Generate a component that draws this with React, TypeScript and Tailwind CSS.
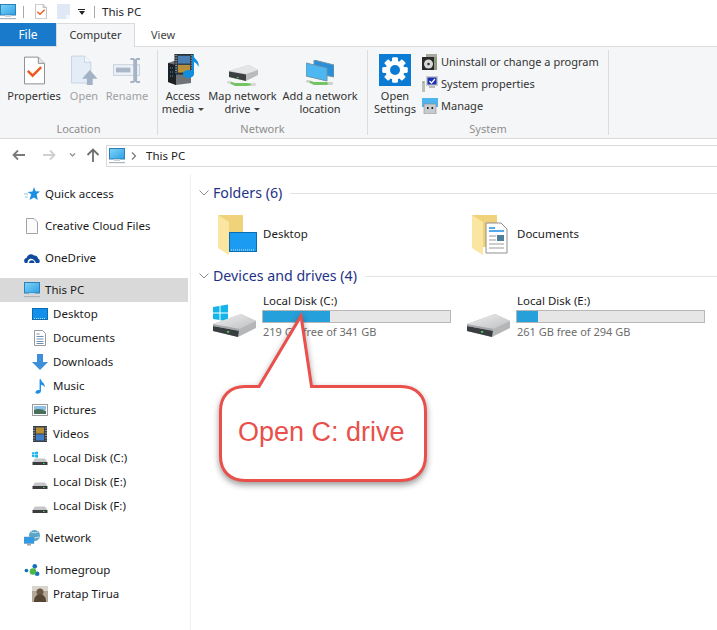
import type { ReactNode } from 'react';

const FONT = 'font-["Noto_Sans","Open_Sans",sans-serif]';

function PcIcon({ className = '' }: { className?: string }) {
  return (
    <svg viewBox="0 0 16 16" className={className}>
      <defs>
        <linearGradient id="pcg" x1="0" y1="0" x2="1" y2="1">
          <stop offset="0" stopColor="#7fd4f7" />
          <stop offset="1" stopColor="#2ea0e6" />
        </linearGradient>
      </defs>
      <rect x="0.5" y="0.5" width="15" height="10.5" fill="url(#pcg)" stroke="#2f7fb8" />
      <rect x="5" y="11" width="6" height="2" fill="#c9d3da" />
      <rect x="0" y="14" width="16" height="1.2" fill="#a9b4bc" />
    </svg>
  );
}

function PageCheck({ className = '' }: { className?: string }) {
  return (
    <svg viewBox="0 0 22 29" className={className}>
      <path d="M.5.5H15L21.5 7V28.5H.5Z" fill="#fff" stroke="#8b8b8b" />
      <path d="M15 .5V7h6.500" fill="#e6e6e6" stroke="#8b8b8b" />
      <path d="M4 15l5 5 9-9" fill="none" stroke="#ee5a1e" strokeWidth="2.6" />
    </svg>
  );
}

function OpenIcon({ className = '' }: { className?: string }) {
  return (
    <svg viewBox="0 0 28 31" className={className}>
      <path d="M.5.5H14L20.500 7V28.500H.5Z" fill="#e3ecf7" stroke="#c6d3e3" />
      <path d="M14 .5V7h6.500" fill="#f4f7fb" stroke="#c6d3e3" />
      <path d="M19.500 15L27.500 24H22.500V30.500H16.500V24H11.500Z" fill="#a3b2c5" />
    </svg>
  );
}

function RenameIcon({ className = '' }: { className?: string }) {
  return (
    <svg viewBox="0 0 29 28" className={className}>
      <rect x=".5" y="8" width="27" height="11" fill="#eef2f7" stroke="#c4d0de" />
      <rect x="3" y="11" width="15" height="5" fill="#a9b7c9" />
      <path d="M18 1h4v1h2v-1h4v2h-3v22h3v2h-4v-1h-2v1h-4v-2h3V3h-3Z" fill="#a5b3c4" />
    </svg>
  );
}

function MediaIcon({ className = '' }: { className?: string }) {
  return (
    <svg viewBox="0 0 33 31" className={className}>
      <path d="M1 9L10 6 24 9V29L9 31 1 28Z" fill="#6f7378" />
      <path d="M1 9L9 11V31L1 28Z" fill="#1d1f23" />
      <path d="M3 14h4M3 18h4M3 22h4" stroke="#2b9be0" strokeWidth="1" strokeDasharray="1 1" />
      <rect x="8" y="0" width="18" height="20" fill="#37424f" stroke="#1d232a" />
      <path d="M9 1v18M25 1v18" stroke="#d8d8d8" strokeDasharray="1 1.500" />
      <rect x="11" y="2" width="12" height="7.500" fill="#4a7fb5" />
      <rect x="11" y="11" width="12" height="7.500" fill="#b58f3a" />
      <path d="M26 1V19" stroke="#0f8ee0" strokeWidth="2" />
      <path d="M26 1c1 4 7 6 5.500 12-1-3-3-5-5.500-5Z" fill="#0f8ee0" />
      <ellipse cx="21.500" cy="20" rx="5.500" ry="4" fill="#0f8ee0" />
    </svg>
  );
}

function NetDriveIcon({ className = '' }: { className?: string }) {
  return (
    <svg viewBox="0 0 32 24" className={className}>
      <path d="M2 8L22 2 31 7V12L19 18 2 14Z" fill="#b9bbbd" />
      <path d="M2 8L22 2 31 7 19 11Z" fill="#e4e5e6" />
      <path d="M2 8.500L19 11.500V18L2 14Z" fill="#3c3f42" />
      <rect x="10" y="14" width="1.500" height="1.200" fill="#4fd65a" />
      <path d="M2 18L8 20H20L27 21V22L20 23H8L2 20Z" fill="#74c464" />
      <rect x="24" y="20" width="5" height="3" rx="1" fill="#d8d8d8" />
      <rect x="0" y="18" width="4" height="2.500" rx="1" fill="#d8d8d8" />
    </svg>
  );
}

function NetLocIcon({ className = '' }: { className?: string }) {
  return (
    <svg viewBox="0 0 28 26" className={className}>
      <path d="M8 0L28 5V17L8 13Z" fill="#2a8fd6" stroke="#6f93a8" />
      <path d="M0 3L21 8V21L0 16Z" fill="#4cb7f1" stroke="#6f93a8" />
      <path d="M2 20L8 22H20L25 23V24L20 25H8L2 22Z" fill="#74c464" />
      <rect x="22" y="22" width="5" height="3" rx="1" fill="#d0d0d0" />
      <rect x="0" y="20" width="4" height="2.500" rx="1" fill="#d0d0d0" />
    </svg>
  );
}

function GearTile({ className = '' }: { className?: string }) {
  const teeth = [0, 45, 90, 135, 180, 225, 270, 315];
  return (
    <svg viewBox="0 0 32 32" className={className}>
      <rect width="32" height="32" fill="#0c7bd4" />
      {teeth.map(a => (
        <rect key={a} x="13.200" y="3.500" width="5.600" height="25" rx="1" fill="#fff" transform={`rotate(${a} 16 16)`} />
      ))}
      <circle cx="16" cy="16" r="9.500" fill="#fff" />
      <circle cx="16" cy="16" r="5" fill="#0c7bd4" />
    </svg>
  );
}

function UninstallIcon() {
  return (
    <svg viewBox="0 0 16 16" className="w-4 h-4 shrink-0">
      <rect x="4" y="0" width="11" height="3" fill="#a8a8a0" />
      <rect x="0" y="3" width="15" height="13" fill="#2a2a2a" />
      <rect x="12" y="3" width="3" height="13" fill="#8f9c7e" />
      <circle cx="6.500" cy="10" r="4.500" fill="#d8d8d8" />
      <circle cx="6.500" cy="10" r="1.300" fill="#333" />
    </svg>
  );
}

function SysPropIcon() {
  return (
    <svg viewBox="0 0 16 16" className="w-4 h-4 shrink-0">
      <rect x="4" y="0" width="12" height="10" fill="#c8ccd0" />
      <rect x="5.500" y="1.500" width="9" height="7" fill="#1c2fb0" />
      <path d="M7.500 5l2 2 3.500-4" fill="none" stroke="#fff" strokeWidth="1.200" />
      <rect x="7" y="10" width="6" height="2" fill="#b5b9bd" />
      <rect x="0" y="5" width="3" height="11" fill="#b9c2b4" />
      <rect x="1" y="6" width="1" height="1" fill="#4fb548" />
    </svg>
  );
}

function ManageIcon() {
  return (
    <svg viewBox="0 0 16 16" className="w-4 h-4 shrink-0">
      <rect x="0" y="0" width="16" height="9" fill="#4db4ee" />
      <rect x="2" y="6" width="12" height="10" fill="#c8cbce" stroke="#8a8d90" strokeWidth="0.6" />
      <rect x="5" y="9" width="1.600" height="2" fill="#222" />
      <rect x="9.500" y="9" width="1.600" height="2" fill="#222" />
    </svg>
  );
}

function BigButton({ width, icon, lines, muted, caret, className = '' }: { width: string; icon: ReactNode; lines: string[]; muted?: boolean; caret?: boolean; className?: string }) {
  return (
    <div className={`${width} ${className} flex flex-col items-center shrink-0`}>
      <div className="h-[35px] flex items-start justify-center">{icon}</div>
      <div className={`text-[11px] leading-[13px] text-center whitespace-nowrap ${muted ? 'text-[#a0a0a0]' : 'text-[#333]'}`}>
        {lines.map((line, i) => (
          <div key={i}>
            {line}
            {caret && i === lines.length - 1 && <span className="inline-block ml-[4px] mb-[2px] border-x-[3px] border-x-transparent border-t-[3px] border-t-[#444]" />}
          </div>
        ))}
      </div>
    </div>
  );
}

function RibbonGroup({ width, label, children }: { width: string; label: string; children: ReactNode }) {
  return (
    <div className={`${width} relative flex flex-col my-[3px] border-r border-[#dcdcdc] shrink-0`}>
      <div className="flex flex-1 pt-[4px]">{children}</div>
      <div className="h-[12px] text-[11px] leading-[12px] text-center text-[#8e8e8e]">{label}</div>
    </div>
  );
}

function Ribbon() {
  return (
    <div className="h-[92px] flex items-stretch bg-[#f5f6f7] border-b border-[#dadbdc]">
      <RibbonGroup width="w-[158px]" label="Location">
        <div className="flex pl-[6px]">
          <BigButton width="w-[56px]" icon={<PageCheck className="w-[21px] h-[29px] mt-[2px]" />} lines={['Properties']} />
          <BigButton width="w-[44px]" muted icon={<OpenIcon className="w-[27px] h-[31px] mt-[1px]" />} lines={['Open']} />
          <BigButton width="w-[42px]" muted icon={<RenameIcon className="w-[28px] h-[27px] mt-[3px]" />} lines={['Rename']} />
        </div>
      </RibbonGroup>
      <RibbonGroup width="w-[210px]" label="Network">
        <BigButton width="w-[50px]" caret icon={<MediaIcon className="w-[33px] h-[31px]" />} lines={['Access', 'media']} />
        <BigButton width="w-[69px]" caret icon={<NetDriveIcon className="w-[32px] h-[24px] mt-[9px]" />} lines={['Map network', 'drive']} />
        <BigButton width="w-[76px]" className="ml-[5px]" icon={<NetLocIcon className="w-[28px] h-[26px] mt-[6px]" />} lines={['Add a network', 'location']} />
      </RibbonGroup>
      <RibbonGroup width="w-[241px]" label="System">
        <BigButton width="w-[54px]" icon={<GearTile className="w-[32px] h-[32px]" />} lines={['Open', 'Settings']} />
        <div className="flex flex-col gap-[6px] text-[11px] leading-[16px] text-[#333] whitespace-nowrap">
          {[
            { label: 'Uninstall or change a program', icon: <UninstallIcon /> },
            { label: 'System properties', icon: <SysPropIcon /> },
            { label: 'Manage', icon: <ManageIcon /> },
          ].map(item => (
            <div key={item.label} className="flex items-center gap-[3px]">
              {item.icon}
              <span>{item.label}</span>
            </div>
          ))}
        </div>
      </RibbonGroup>
    </div>
  );
}

function TitleBar() {
  return (
    <div className="h-[23px] flex items-center bg-white">
      <PcIcon className="w-[16px] h-[16px] shrink-0" />
      <div className="w-px h-[12px] bg-[#a8a8a8] ml-[7px]" />
      <PageCheck className="w-[12px] h-[15px] ml-[11px]" />
      <svg viewBox="0 0 13 15" className="w-[13px] h-[15px] ml-[10px]">
        <path d="M0 0H13V15H0Z" fill="#dfe8f4" />
        <path d="M9 11h4v4h-4Z" fill="#f2f5fa" />
      </svg>
      <span className="ml-[8px] flex flex-col items-center gap-[1px]">
        <span className="w-[7px] h-px bg-[#222]" />
        <span className="border-x-[3px] border-x-transparent border-t-[4px] border-t-[#222]" />
      </span>
      <div className="w-px h-[12px] bg-[#a8a8a8] ml-[9px]" />
      <span className="ml-[7px] text-[11.500px] text-[#222]">This PC</span>
    </div>
  );
}

function Tabs() {
  return (
    <div className="h-[24px] flex items-stretch bg-white border-b border-[#dadbdc] text-[11px] leading-[23px]">
      <div className="w-[56px] h-[23px] bg-[#1979ca] text-white text-center text-[12px]">File</div>
      <div className="w-[79px] h-[24px] bg-[#f5f6f7] border-x border-t border-[#dadbdc] text-[#333] text-center leading-[21px]">Computer</div>
      <div className="w-[56px] text-[#444] text-center">View</div>
    </div>
  );
}

function AddressBar() {
  return (
    <div className="h-[35px] flex items-start pt-[6px] bg-white">
      <svg viewBox="0 0 94 20" className="w-[94px] h-[20px] mt-[1px] ml-[12px] shrink-0" fill="none">
        <path d="M13 9H2M6 4.500L1.500 9 6 13.500" stroke="#7a7a7a" strokeWidth="1.800" />
        <path d="M31 9H43M38 4.500L42.500 9 38 13.500" stroke="#cfcfcf" strokeWidth="1.800" />
        <path d="M58 7.500l2.500 2.500L63 7.500" stroke="#8a8a8a" strokeWidth="1.200" />
        <path d="M81 16V4M75.500 9L81 3.500 86.500 9" stroke="#6e6e6e" strokeWidth="1.800" />
      </svg>
      <div className="flex-1 h-[22px] flex items-center border-y border-l border-[#d9d9d9]">
        <PcIcon className="w-[16px] h-[16px] ml-[2px] shrink-0" />
        <svg viewBox="0 0 6 8" className="w-[6px] h-[8px] ml-[6px]">
          <path d="M1 .5L4.500 4 1 7.500" fill="none" stroke="#777" strokeWidth="1.200" />
        </svg>
        <span className="ml-[9px] text-[11.500px] text-[#222]">This PC</span>
      </div>
    </div>
  );
}

function Desktop16() {
  return (
    <svg viewBox="0 0 16 12" className="w-[16px] h-[12px]">
      <rect width="16" height="12" fill="#1390ea" />
      <rect x=".5" y=".5" width="15" height="11" fill="none" stroke="#0a6cb3" />
      <path d="M2 10.500h12" stroke="#bfe4fb" strokeDasharray="1 1" />
    </svg>
  );
}

function DocSmall() {
  return (
    <svg viewBox="0 0 12 16" className="w-[12px] h-[16px]">
      <path d="M.5.5H8.500L11.500 3.500V15.500H.5Z" fill="#fff" stroke="#9a9a9a" />
      <path d="M2.500 4h3M2.500 6.500h7M2.500 9h7M2.500 11.500h7M2.500 13.500h7" stroke="#6f8fae" strokeWidth="1" />
    </svg>
  );
}

function DiskSmall({ win }: { win?: boolean }) {
  return (
    <svg viewBox="0 0 16 14" className="w-[16px] h-[14px]">
      {win && <path d="M0 1.500L2.500 1V3.400H0ZM3 .9L6 .4V3.400H3ZM0 4H2.500V6.200L0 5.800ZM3 4H6V6.800L3 6.300Z" fill="#19b4ea" />}
      <path d="M3 7.500H13L15.500 11H.5Z" fill="#c4c6c8" />
      <rect x=".5" y="11" width="15" height="3" fill="#3a3c3e" />
      <rect x="11" y="12" width="1.500" height="1" fill="#56d15a" />
    </svg>
  );
}

type NavEntry = { label: string; icon: ReactNode; sub?: boolean; active?: boolean; gap?: boolean };

const navEntries: NavEntry[] = [
  {
    label: 'Quick access',
    icon: (
      <svg viewBox="0 0 16 14" className="w-[16px] h-[14px]">
        <path d="M10 0l1.600 4.200 4.400.2-3.400 2.800L13.800 13 10 10.500 5.500 13l1.700-5.800L3.500 5 8.500 4.400Z" fill="#1c8fe3" />
        <path d="M0 7h4M1 10h3" stroke="#8cc8ef" />
      </svg>
    ),
  },
  {
    label: 'Creative Cloud Files',
    gap: true,
    icon: (
      <svg viewBox="0 0 12 16" className="w-[12px] h-[16px]">
        <path d="M.5.5H8L11.500 4V15.500H.5Z" fill="#fbfbfb" stroke="#a3a3a3" />
      </svg>
    ),
  },
  {
    label: 'OneDrive',
    gap: true,
    icon: (
      <svg viewBox="0 0 16 10" className="w-[16px] h-[10px]">
        <path d="M1 10C-.5 8 0 5.500 2.500 5 3.500 1.500 7.500 0 10 2.500 12 2 14 3.500 14 5.500 15.500 6 16.500 8.500 15 10H12C11 7 8 5 5.500 6 4 7 3.500 8.500 3.500 10Z" fill="#0f4a9c" />
        <path d="M5 10C5 8 7 6.500 9 7.500 10 8 10.500 9 10.500 10Z" fill="#0f4a9c" />
      </svg>
    ),
  },
  { label: 'This PC', gap: true, active: true, icon: <PcIcon className="w-[16px] h-[16px]" /> },
  { label: 'Desktop', sub: true, icon: <Desktop16 /> },
  { label: 'Documents', sub: true, icon: <DocSmall /> },
  {
    label: 'Downloads',
    sub: true,
    icon: (
      <svg viewBox="0 0 16 16" className="w-[16px] h-[16px]">
        <path d="M5 0H11V8H16L8 16 0 8H5Z" fill="#3d8fdc" />
      </svg>
    ),
  },
  {
    label: 'Music',
    sub: true,
    icon: (
      <svg viewBox="0 0 12 16" className="w-[11px] h-[15px]">
        <path d="M5 0h1.500C7 4 11.500 4 10.500 9 9.800 7 8 6 6.500 6V13C6.500 15 4.500 16 2.500 16 .5 16 0 14.500 1 13.200 2 12 4 11.500 5 12Z" fill="#1d8fe6" />
      </svg>
    ),
  },
  {
    label: 'Pictures',
    sub: true,
    icon: (
      <svg viewBox="0 0 16 12" className="w-[16px] h-[12px]">
        <rect x=".5" y=".5" width="15" height="11" fill="#fff" stroke="#9a9a9a" />
        <rect x="2" y="2" width="12" height="4" fill="#8fc1ea" />
        <path d="M2 6C6 4 10 5 14 7V10H2Z" fill="#47705b" />
      </svg>
    ),
  },
  {
    label: 'Videos',
    sub: true,
    icon: (
      <svg viewBox="0 0 14 16" className="w-[14px] h-[16px]">
        <rect width="14" height="16" fill="#3a3f45" />
        <path d="M1 1.500v13M13 1.500v13" stroke="#e5e5e5" strokeDasharray="1 1.500" />
        <rect x="3" y="1.500" width="8" height="6" fill="#b58f3a" />
        <rect x="3" y="8.500" width="8" height="6" fill="#3f7ec9" />
      </svg>
    ),
  },
  { label: 'Local Disk (C:)', sub: true, icon: <DiskSmall win /> },
  { label: 'Local Disk (E:)', sub: true, icon: <DiskSmall /> },
  { label: 'Local Disk (F:)', sub: true, icon: <DiskSmall /> },
  {
    label: 'Network',
    gap: true,
    icon: (
      <svg viewBox="0 0 16 16" className="w-[16px] h-[16px]">
        <circle cx="10.500" cy="5.500" r="5.500" fill="#5aa5c8" />
        <path d="M7 2c2 1 5 1 7 0M6 7c2 1 6 1 9 0" stroke="#cfe6f1" fill="none" />
        <rect x="0" y="7" width="10" height="6.500" fill="#2f9be6" stroke="#6d8fa6" strokeWidth=".5" />
        <rect x="3" y="14" width="4" height="1.500" fill="#9aa5ad" />
      </svg>
    ),
  },
  {
    label: 'Homegroup',
    gap: true,
    icon: (
      <svg viewBox="0 0 16 14" className="w-[16px] h-[13px]">
        <circle cx="2" cy="7" r="2" fill="#1a6fc0" />
        <circle cx="11" cy="2.500" r="2.500" fill="#1a6fc0" />
        <circle cx="13.500" cy="10.500" r="2.500" fill="#1a6fc0" />
        <circle cx="9" cy="8" r="3.500" fill="#4cb648" />
      </svg>
    ),
  },
  {
    label: 'Pratap Tirua',
    sub: true,
    icon: (
      <svg viewBox="0 0 16 16" className="w-[16px] h-[16px]">
        <rect width="16" height="16" fill="#b3a99a" />
        <rect width="16" height="5" fill="#d9d4cc" />
        <circle cx="8" cy="6" r="3.500" fill="#6d5844" />
        <path d="M2 16C2 10 5 8.500 8 8.500S14 10 14 16Z" fill="#574533" />
      </svg>
    ),
  },
];

function Sidebar() {
  return (
    <nav className="w-[191px] shrink-0 border-r border-[#f0f0f0] pt-[8px] text-[11.500px] text-[#1a1a1a]">
      {navEntries.map(entry => (
        <div key={entry.label} className={`h-[24px] w-[188px] flex items-center ${entry.gap ? 'mt-[8px]' : ''} ${entry.active ? 'bg-[#d9d9d9]' : ''} ${entry.sub ? 'pl-[32px]' : 'pl-[24px]'}`}>
          <span className="w-[16px] h-[16px] flex items-center justify-center shrink-0">{entry.icon}</span>
          <span className="ml-[5px]">{entry.label}</span>
        </div>
      ))}
    </nav>
  );
}

function SectionHeader({ label }: { label: string }) {
  return (
    <div className="h-[20px] flex items-center">
      <svg viewBox="0 0 10 6" className="w-[10px] h-[6px] ml-[8px] shrink-0">
        <path d="M.5.5L5 5 9.500.5" fill="none" stroke="#8a8a8a" />
      </svg>
      <span className="ml-[4px] text-[14.200px] text-[#1e3287] whitespace-nowrap">{label}</span>
      <div className="flex-1 h-px ml-[8px] bg-[#e2e2e2]" />
    </div>
  );
}

function FolderBase({ children }: { children: ReactNode }) {
  return (
    <svg viewBox="0 0 40 40" className="w-[40px] h-[40px] shrink-0">
      <path d="M0 0H25V32H9L0 26Z" fill="#f0d27a" />
      <path d="M0 0L11 7V40L0 33Z" fill="#fbe6a1" />
      {children}
    </svg>
  );
}

function FolderTile({ label, icon }: { label: string; icon: ReactNode }) {
  return (
    <div className="w-[254px] h-[40px] flex items-center pl-[27px]">
      <FolderBase>{icon}</FolderBase>
      <span className="ml-[5px] mb-[2px] text-[11.500px] text-[#1a1a1a]">{label}</span>
    </div>
  );
}

function BigDisk({ win }: { win?: boolean }) {
  return (
    <svg viewBox="0 0 44 34" className="w-[44px] h-[34px] shrink-0">
      <defs>
        <linearGradient id="dsk" x1="0" y1="0" x2="1" y2="1">
          <stop offset="0" stopColor="#f0f0f0" />
          <stop offset="1" stopColor="#bdbfc1" />
        </linearGradient>
      </defs>
      {win && <path d="M1 3L7.500 2V8.500H1ZM8.500 1.800L16 .5V8.500H8.500ZM1 9.500H7.500V16L1 15ZM8.500 9.500H16V17.500L8.500 16.200Z" fill="#12b4ea" />}
      <path d="M1 20L29 10 44 17V24L26 33 1 27Z" fill="#b4b6b8" />
      <path d="M1 20L29 10 44 17 27.500 25Z" fill="url(#dsk)" />
      <path d="M1 22L27 26.500 26 33 1 27Z" fill="#3a3d40" />
      <path d="M1 20.500L27.500 25 27 27 1 22Z" fill="#a4a7a9" />
      <rect x="15" y="27" width="2.200" height="1.600" fill="#4fd65a" />
    </svg>
  );
}

function DriveTile({ name, free, percent, win }: { name: string; free: string; percent: number; win?: boolean }) {
  return (
    <div className="w-[254px] shrink-0 flex pl-[21px] items-end">
      <div className="pb-[3px] shrink-0"><BigDisk win={win} /></div>
      <div className="ml-[6px] w-[189px] shrink-0">
        <div className="h-[16px] pl-[1px] text-[11.500px] leading-[16px] text-[#1a1a1a] whitespace-nowrap">{name}</div>
        <div className="h-[13px] mt-[1px] bg-[#e6e6e6] border border-[#b8b8b8]">
          <div className="h-full bg-[#26a0da]" style={{ width: `${percent}%` }} />
        </div>
        <div className="h-[18px] pl-[1px] text-[11px] leading-[18px] text-[#6d6d6d] whitespace-nowrap">{free}</div>
      </div>
    </div>
  );
}

function Content() {
  return (
    <main className="flex-1 min-w-0 pt-[9px]">
      <SectionHeader label="Folders (6)" />
      <div className="flex mt-[12px]">
        <FolderTile
          label="Desktop"
          icon={
            <g>
              <rect x="11.500" y="17.500" width="27" height="19" fill="#1b9cf2" stroke="#0a6cb3" />
              <path d="M13 35h24" stroke="#cbe9fc" strokeDasharray="1 1" />
            </g>
          }
        />
        <FolderTile
          label="Documents"
          icon={
            <g>
              <path d="M14 8H29L35 14V38H14Z" fill="#fff" stroke="#8f8f8f" />
              <path d="M17 13h6M17 16h15" stroke="#1d8fe6" strokeWidth="1.400" />
              <path d="M17 21h7M17 25h7M17 29h15M17 33h15" stroke="#9a9a9a" />
              <rect x="25" y="20" width="7" height="6" fill="#4d7e9b" />
            </g>
          }
        />
      </div>
      <div className="mt-[11px]"><SectionHeader label="Devices and drives (4)" /></div>
      <div className="flex mt-[7px]">
        <DriveTile name="Local Disk (C:)" free="219 GB free of 341 GB" percent={36} win />
        <DriveTile name="Local Disk (E:)" free="261 GB free of 294 GB" percent={11} />
      </div>
    </main>
  );
}

function Callout() {
  return (
    <div className="absolute left-[215px] top-[310px] w-[220px] h-[180px]">
      <svg viewBox="0 0 220 180" className="w-full h-full drop-shadow-[0_3px_3px_rgba(0,0,0,0.4)]">
        <path
          d="M30 76.500H44L86 6 96.500 76.500H186C201 76.500 210.500 86 210.500 101V146C210.500 161 201 170.500 186 170.500H30C15 170.500 5.500 161 5.500 146V101C5.500 86 15 76.500 30 76.500Z"
          fill="#fff"
          stroke="#e9504b"
          strokeWidth="3"
        />
      </svg>
      <div className="absolute left-[23px] top-[103px] text-[27px] leading-[38px] text-[#e9504b] font-['Liberation_Sans',sans-serif] whitespace-nowrap">Open C: drive</div>
    </div>
  );
}

export default function App() {
  return (
    <div className={`relative w-[717px] h-[630px] overflow-hidden bg-white ${FONT}`}>
      <TitleBar />
      <Tabs />
      <Ribbon />
      <AddressBar />
      <div className="flex h-[456px]">
        <Sidebar />
        <Content />
      </div>
      <Callout />
    </div>
  );
}
